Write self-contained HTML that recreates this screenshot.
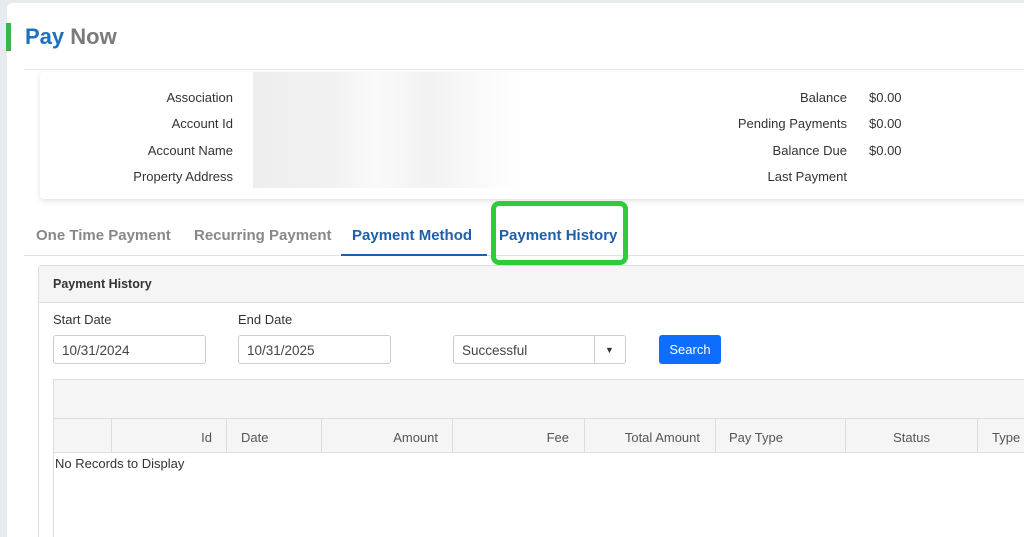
<!DOCTYPE html>
<html><head><style>
*{margin:0;padding:0;box-sizing:border-box}
html,body{width:1024px;height:537px;overflow:hidden}
body{background:#e6ebf0;font-family:"Liberation Sans",sans-serif;font-size:13px;color:#333;position:relative}
.a{position:absolute}
.main{left:7px;top:3px;width:1017px;height:534px;background:#fff;border-radius:5px 0 0 0}
.lbl{text-align:right;width:200px;left:33px}
.rl{text-align:right;width:200px;left:647px}
.tab{font-weight:bold;font-size:15px;color:#888;top:227px}
.inp{height:29px;border:1px solid #ccc;border-radius:3px;padding:7px 8px;font-size:13.5px;color:#444;top:335px}
.th{top:430px;font-size:13px;color:#555}
.vl{top:418px;width:1px;height:35px;background:#ddd}
</style></head><body>
<div class="a main"></div>
<div class="a" style="left:6px;top:23px;width:5px;height:28px;background:#3cb44b"></div>
<div class="a" style="left:25px;top:24px;font-size:22px;font-weight:bold"><span style="color:#1f6fbf">Pay</span> <span style="color:#7a7a7a">Now</span></div>
<div class="a" style="left:24px;top:69px;width:1000px;height:1px;background:#e6e6e6"></div>
<div class="a" style="left:40px;top:72px;width:990px;height:127px;background:#fff;box-shadow:0 2px 6px rgba(0,0,0,.12);border-radius:4px"></div>
<div class="a" style="left:253px;top:72px;width:270px;height:116px;background:linear-gradient(90deg,#eee,#f1f1f1 30%,#fafafa 45%,#f2f2f2 65%,#fcfcfc 90%,#fff)"></div>
<div class="a lbl" style="top:90px">Association</div>
<div class="a lbl" style="top:116px">Account Id</div>
<div class="a lbl" style="top:143px">Account Name</div>
<div class="a lbl" style="top:169px">Property Address</div>
<div class="a rl" style="top:90px">Balance</div>
<div class="a rl" style="top:116px">Pending Payments</div>
<div class="a rl" style="top:143px">Balance Due</div>
<div class="a rl" style="top:169px">Last Payment</div>
<div class="a" style="left:869px;top:90px">$0.00</div>
<div class="a" style="left:869px;top:116px">$0.00</div>
<div class="a" style="left:869px;top:143px">$0.00</div>
<div class="a" style="left:24px;top:255px;width:1000px;height:1px;background:#e0e0e0"></div>
<div class="a tab" style="left:36px">One Time Payment</div>
<div class="a tab" style="left:194px">Recurring Payment</div>
<div class="a tab" style="left:352px;color:#1f5fa8">Payment Method</div>
<div class="a" style="left:341px;top:254px;width:146px;height:2px;background:#1f5fa8"></div>
<div class="a tab" style="left:499px;color:#1f5fa8">Payment History</div>
<div class="a" style="left:491px;top:201px;width:137px;height:64px;border:5px solid #2fcc3a;border-radius:8px"></div>
<div class="a" style="left:38px;top:265px;width:990px;height:280px;border:1px solid #ddd;border-radius:3px"></div>
<div class="a" style="left:39px;top:266px;width:990px;height:37px;background:#f5f5f5;border-bottom:1px solid #ddd"></div>
<div class="a" style="left:53px;top:277px;font-weight:bold;font-size:12.5px;color:#333">Payment History</div>
<div class="a" style="left:53px;top:312px">Start Date</div>
<div class="a" style="left:238px;top:312px">End Date</div>
<div class="a inp" style="left:53px;width:153px">10/31/2024</div>
<div class="a inp" style="left:238px;width:153px">10/31/2025</div>
<div class="a inp" style="left:453px;width:173px">Successful</div>
<div class="a" style="left:594px;top:336px;width:1px;height:27px;background:#ccc"></div>
<div class="a" style="left:605px;top:345px;font-size:9px;color:#333">▼</div>
<div class="a" style="left:659px;top:335px;width:62px;height:29px;background:#0d6efd;border-radius:3px;color:#fff;text-align:center;line-height:29px">Search</div>
<div class="a" style="left:53px;top:379px;width:980px;height:170px;border:1px solid #ddd"></div>
<div class="a" style="left:54px;top:380px;width:980px;height:73px;background:#f5f5f5;border-bottom:1px solid #ddd"></div>
<div class="a" style="left:54px;top:418px;width:980px;height:1px;background:#ddd"></div>
<div class="a vl" style="left:111px"></div><div class="a vl" style="left:226px"></div><div class="a vl" style="left:321px"></div><div class="a vl" style="left:452px"></div><div class="a vl" style="left:584px"></div><div class="a vl" style="left:715px"></div><div class="a vl" style="left:845px"></div><div class="a vl" style="left:977px"></div>
<div class="a th" style="left:112px;width:100px;text-align:right">Id</div>
<div class="a th" style="left:241px">Date</div>
<div class="a th" style="left:322px;width:116px;text-align:right">Amount</div>
<div class="a th" style="left:453px;width:116px;text-align:right">Fee</div>
<div class="a th" style="left:585px;width:115px;text-align:right">Total Amount</div>
<div class="a th" style="left:729px">Pay Type</div>
<div class="a th" style="left:846px;width:84px;text-align:right">Status</div>
<div class="a th" style="left:992px">Type</div>
<div class="a" style="left:55px;top:456px">No Records to Display</div>
</body></html>
